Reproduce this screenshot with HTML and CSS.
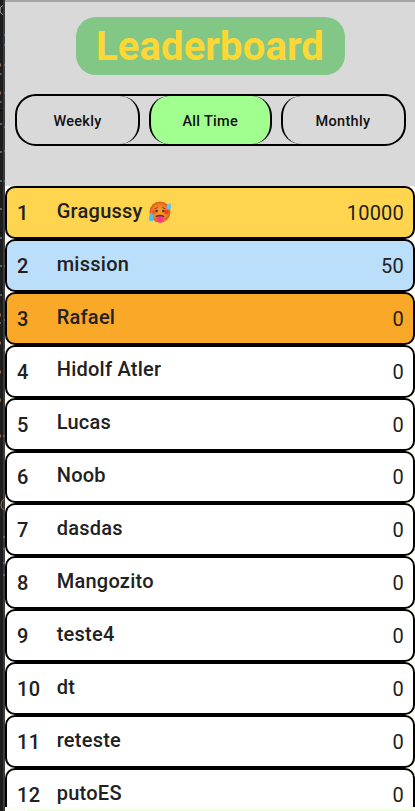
FILE: index.html
```html
<!DOCTYPE html>
<html lang="en">
<head>
<meta charset="utf-8">
<title>Leaderboard</title>
<link rel="stylesheet" href="styles.css">
</head>
<body>
<div class="screen">
  <aside class="edge">
    <svg width="5" height="811" viewBox="0 0 5 811">
      <path d="M0 110.500H3M0 233H3" stroke="#0c0c0c"/>
      <path d="M3 5.500Q0 6 0 10T3 14.500" fill="none" stroke="#999" />
      <path d="M0 74h1.500M0 102h1.500M0 124h2M0 152h2M0 181h2M0 209h2M0 238h2M0 266h2M0 295h2M0 323h1" stroke="#73767b" stroke-width="1.500"/>
      <path d="M0 65h1M0 93h1M0 315h1M0 343h1M0 372h1M0 400h1M0 436h1" stroke="#946747" stroke-width="3"/>
      <path d="M4 35h1M4 45h1M4 65h1M4 93h1M4 127h1M4 151h1M4 181h1M4 266h1M4 320h1M4 350h1M3 436h2M3 537h2M3 549h2M3 563h2M3 575h2" stroke="#52677f" stroke-width="2"/>
      <path d="M4 499Q1 501 1 505T4 510" fill="none" stroke="#ad764f"/>
    </svg>
  </aside>
  <main class="app">
    <header class="top">
      <h1 class="title">Leaderboard</h1>
      <nav class="tabs">
        <button class="tab first">Weekly</button>
        <button class="tab active">All Time</button>
        <button class="tab last">Monthly</button>
      </nav>
    </header>
    <ol class="list">
      <li class="row gold"><span class="rank">1</span><span class="name">Gragussy
        <svg class="face" viewBox="0 0 24 24" role="img" aria-label="hot face">
          <defs><radialGradient id="heat"><stop offset="0" stop-color="#f7a027"/><stop offset=".65" stop-color="#f18324"/><stop offset="1" stop-color="#e0591f"/></radialGradient></defs>
          <circle cx="12" cy="12" r="10.500" fill="url(#heat)"/>
          <circle cx="5.800" cy="12" r="2.300" fill="#ec602b"/><circle cx="18.500" cy="12" r="2.300" fill="#ec4030"/>
          <path d="M6.500 8.800Q8.500 8.500 9.800 7M14.200 7Q15.500 8.500 17.500 8.800" fill="none" stroke="#7d3b1a" stroke-width="1"/>
          <circle cx="8.700" cy="11" r="1.200" fill="#5c2918"/><circle cx="15.300" cy="11" r="1.200" fill="#5c2918"/>
          <path d="M7.500 17.200Q8 14.800 12 14.800T16.500 17.200Z" fill="#722f25"/>
          <path d="M8.800 17Q12 15.500 15.200 17V20Q15.200 22.800 12 22.800T8.800 20Z" fill="#ff3b8c"/><path d="M12 17v3" stroke="#d92377" stroke-width=".7"/>
          <path d="M3.300 12Q.800 15.500 .800 18.500A2.500 2.700 0 0 0 5.900 18.500Q5.700 15.500 3.300 12Z" fill="#4fc0ef"/>
          <path d="M22.500 3Q18.800 4.500 18.500 7A2.400 2.400 0 0 0 23 8.300Q23.600 6.500 22.500 3Z" fill="#62c6ec"/>
        </svg></span><span class="score">10000</span></li>
      <li class="row silver"><span class="rank">2</span><span class="name">mission</span><span class="score">50</span></li>
      <li class="row bronze"><span class="rank">3</span><span class="name">Rafael</span><span class="score">0</span></li>
      <li class="row"><span class="rank">4</span><span class="name">Hidolf Atler</span><span class="score">0</span></li>
      <li class="row"><span class="rank">5</span><span class="name">Lucas</span><span class="score">0</span></li>
      <li class="row"><span class="rank">6</span><span class="name">Noob</span><span class="score">0</span></li>
      <li class="row"><span class="rank">7</span><span class="name">dasdas</span><span class="score">0</span></li>
      <li class="row"><span class="rank">8</span><span class="name">Mangozito</span><span class="score">0</span></li>
      <li class="row"><span class="rank">9</span><span class="name">teste4</span><span class="score">0</span></li>
      <li class="row"><span class="rank">10</span><span class="name">dt</span><span class="score">0</span></li>
      <li class="row"><span class="rank">11</span><span class="name">reteste</span><span class="score">0</span></li>
      <li class="row"><span class="rank">12</span><span class="name">putoES</span><span class="score">0</span></li>
    </ol>
    <footer class="bottom"></footer>
  </main>
</div>
</body>
</html>
```
FILE: styles.css
```css
* { box-sizing: border-box; }
body { margin: 0; font-family: Roboto, "Liberation Sans", sans-serif; color: #212121; overflow: hidden; }
.screen { display: flex; width: 415px; height: 811px; overflow: hidden; }
.edge { width: 5px; height: 811px; background: linear-gradient(90deg, #1d1d1d 3px, #3b3b3b 3px); }
.edge svg { display: block; }
.app { width: 410px; height: 811px; display: flex; flex-direction: column; background: #fdfdf5; }
.top { flex: none; height: 186px; background: #d9d9d9; border-top: 2px solid #a6a6a6; padding: 15px 9px 0; }
.title { width: 269px; height: 58px; margin: 0 auto; border-radius: 20px; background: #82c785; color: #fdd835; font-size: 40px; line-height: 59px; font-weight: 700; letter-spacing: .12px; text-align: center; white-space: nowrap; }
.tabs { display: flex; justify-content: space-between; height: 52px; margin: 19px 0 0 .5px; border: 2px solid #000; border-radius: 21px; overflow: hidden; }
.tab { border: 0 solid #000; border-radius: 20px; padding: 2px 0 0; background: none; font: 500 14.500px Roboto, sans-serif; letter-spacing: .3px; color: #111; height: 48px; width: 123px; }
.first { border-right-width: 2px; padding-left: 1px; }
.active { background: #a1ff8f; border-left-width: 2px; border-right-width: 2px; }
.last { border-left-width: 2px; padding-right: 1px; }
.list { flex: 1; min-height: 0; overflow: hidden; margin: 0; padding: .1px 0 0; list-style: none; }
.row { display: flex; align-items: center; height: 52.900px; border: 2px solid #000; border-radius: 10px; background: #fff; padding: 0 9px 0 10px; font-size: 20px; line-height: 24px; }
.gold { background: #ffd54f; }
.silver { background: #bbdefb; }
.bronze { background: #faa828; }
.rank { width: 39.700px; font-weight: 500; padding-top: 1px; letter-spacing: .3px; }
.name { flex: 1; font-weight: 500; padding-bottom: 3.500px; letter-spacing: .25px; }
.face { width: 24px; height: 24px; margin: -1px 0; vertical-align: -5px; }
.score { padding-top: .8px; letter-spacing: .2px; }
.bottom { flex: none; height: 4px; background: linear-gradient(90deg, #fdfdf5 22px, #e2ffd6 22px) 0 3px / 100% 1px no-repeat; }
```
